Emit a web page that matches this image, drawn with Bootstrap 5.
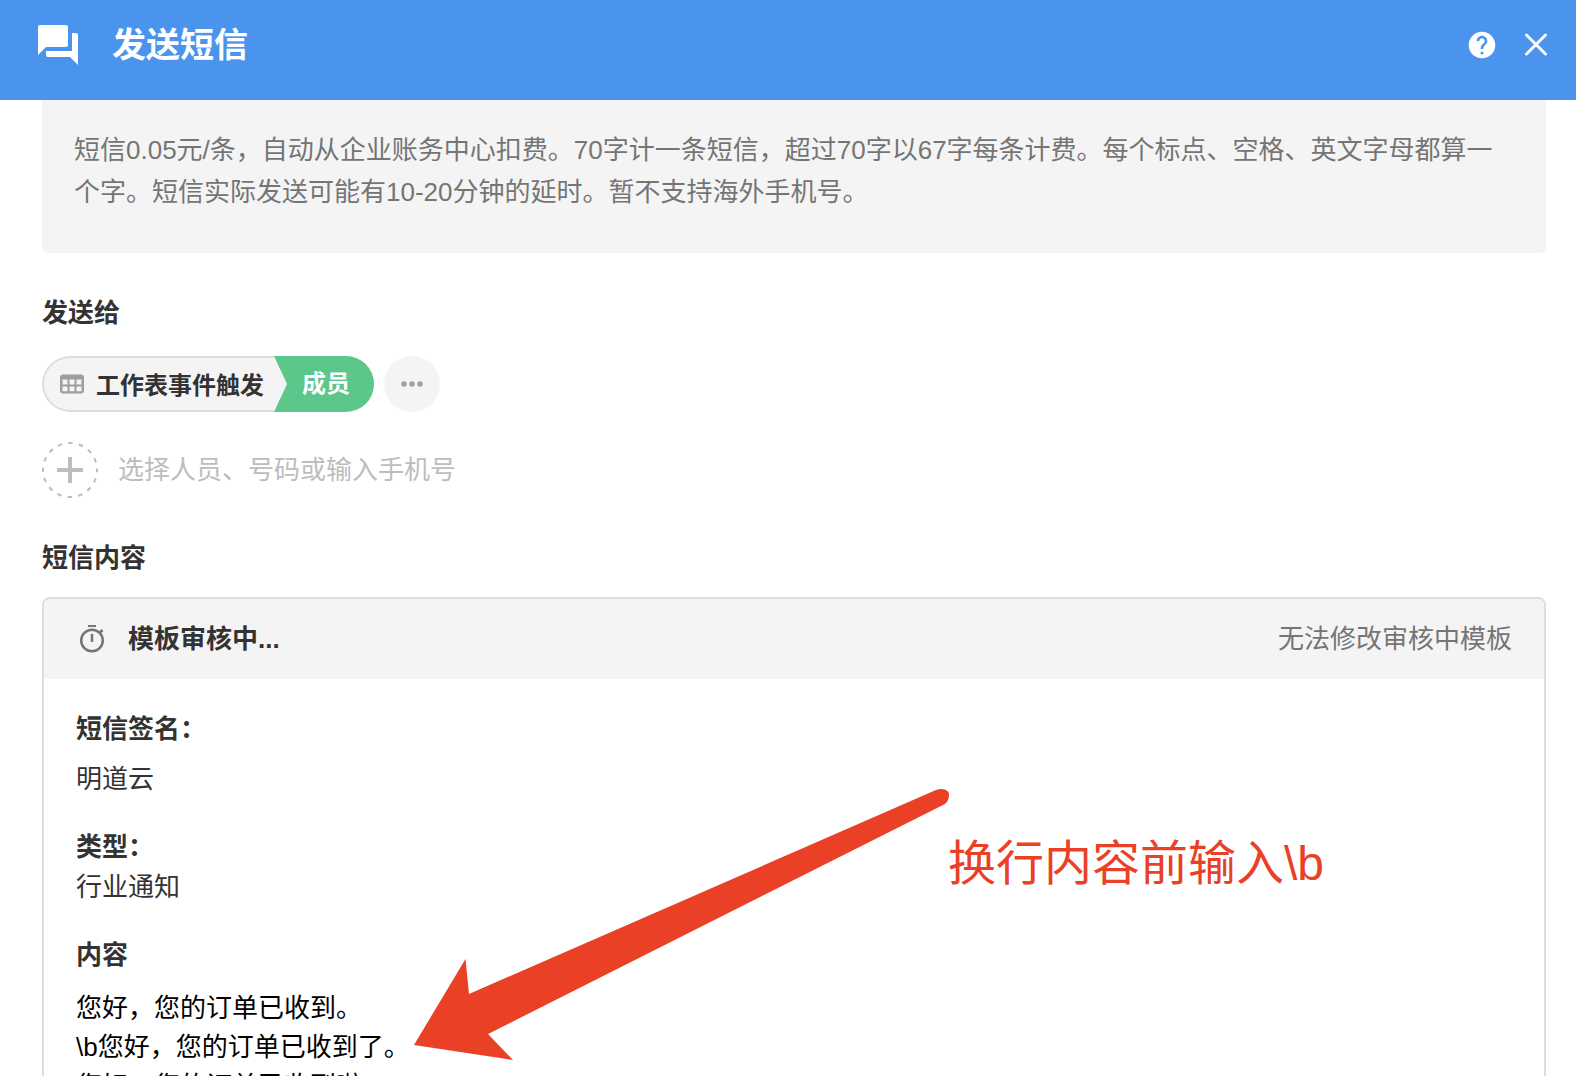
<!DOCTYPE html>
<html lang="zh-CN">
<head>
<meta charset="utf-8">
<meta name="viewport" content="width=device-width, initial-scale=1">
<title>发送短信</title>
<link href="https://cdn.jsdelivr.net/npm/bootstrap@5.3.0/dist/css/bootstrap.min.css" rel="stylesheet">
<style>
body { font-family: "Liberation Sans", "Noto Sans CJK SC", sans-serif; font-size: 26px; line-height: 40px; color: #333; }
.topbar { background: #4a94ed; height: 100px; padding: 0 24px 10px 38px; }
.topbar h1 { font-size: 34px; line-height: 48px; margin: 0 0 0 34px; font-weight: 700; }
.top-actions { gap: 22px; }
.icon-btn { border: 0; background: none; padding: 0; color: inherit; display: flex; align-items: center; justify-content: center; }
.panel { padding: 0 30px 0 42px; }
.tips { background: #f4f4f4; color: #757575; border-radius: 0 0 6px 6px; padding: 29px 32px 40px; line-height: 42px; }
.sec { margin-top: 40px; }
.sec-title { font-size: 26px; line-height: 40px; font-weight: 700; margin: 0; }
.pill-row { margin-top: 23px; gap: 10px; }
.pill { height: 56px; border-radius: 28px; background: #f4f4f4; overflow: hidden; font-size: 24px; font-weight: 700; }
.pill-source { height: 56px; border: 2px solid #ddd; border-right: 0; border-radius: 28px 0 0 28px; padding: 4px 10px 0 16px; gap: 12px; }
.pill-source svg { margin-bottom: 4px; }
.pill-field { height: 56px; width: 100px; background: #5bc78a; color: #fff; padding-left: 28px; clip-path: polygon(0 0, 100% 0, 100% 100%, 0 100%, 13px 50%); }
.more-btn { width: 56px; height: 56px; border-radius: 50%; background: #f4f4f4; color: #9e9e9e; }
.add-row { margin-top: 30px; gap: 20px; }
.add-btn { width: 56px; height: 56px; color: #bdbdbd; }
.add-input { color: #333; border: 0; outline: 0; padding: 0; background: none; height: 40px; }
.add-input::placeholder { color: #bdbdbd; opacity: 1; }
.tpl { border: 2px solid #ddd; border-radius: 8px; margin-top: 19px; }
.tpl-head { background: #f4f4f4; height: 80px; padding: 0 32px 0 34px; border-radius: 6px 6px 0 0; gap: 22px; }
.tpl-body { padding: 30px 32px; }
.tpl-body dt { font-weight: 700; }
.tpl-body dd { margin: 0 0 28px; }
.tpl-body .sign { margin-top: 10px; }
.tpl-body .sms-text { margin-top: 14px; line-height: 39px; color: #000; white-space: pre-line; }
.muted { color: #757575; }
.note-layer { position: absolute; left: 370px; top: 110px; color: #ea4026; pointer-events: none; }
.note-layer svg { overflow: visible; }
.note-text { position: absolute; left: 534px; top: 45px; font-size: 48px; line-height: 60px; white-space: nowrap; }
</style>
<script src="https://cdn.jsdelivr.net/npm/bootstrap@5.3.0/dist/js/bootstrap.bundle.min.js"></script>
</head>
<body>
<div class="vh-100 d-flex flex-column overflow-hidden bg-white">
  <header class="topbar d-flex align-items-center text-white flex-shrink-0">
    <svg width="40" height="40" viewBox="2 2 20 20" fill="currentColor" aria-hidden="true"><path d="M21 6h-2v9H6v2c0 .55.45 1 1 1h11l4 4V7c0-.55-.45-1-1-1zm-4 6V3c0-.55-.45-1-1-1H3c-.55 0-1 .45-1 1v14l4-4h10c.55 0 1-.45 1-1z"/></svg>
    <h1>发送短信</h1>
    <div class="top-actions ms-auto d-flex align-items-center">
      <button class="icon-btn" type="button" aria-label="帮助">
        <svg width="32" height="32" viewBox="0 0 24 24" fill="currentColor"><path d="M12 2C6.48 2 2 6.48 2 12s4.48 10 10 10 10-4.48 10-10S17.520 2 12 2zm1 17h-2v-2h2v2zm2.070-7.750l-.9.920C13.450 12.900 13 13.500 13 15h-2v-.5c0-1.100.45-2.100 1.170-2.830l1.240-1.260c.37-.36.59-.86.59-1.410 0-1.100-.9-2-2-2s-2 .9-2 2H8c0-2.210 1.790-4 4-4s4 1.790 4 4c0 .88-.36 1.680-.93 2.250z"/></svg>
      </button>
      <button class="icon-btn" type="button" aria-label="关闭">
        <svg width="32" height="32" viewBox="0 0 32 32" fill="none" stroke="currentColor" stroke-width="3" stroke-linecap="round"><path d="M6.500 6L25.500 25M25.500 6L6.500 25"/></svg>
      </button>
    </div>
  </header>

  <main class="panel flex-grow-1 overflow-hidden">
    <div class="tips">短信0.05元/条，自动从企业账务中心扣费。70字计一条短信，超过70字以67字每条计费。每个标点、空格、英文字母都算一个字。短信实际发送可能有10-20分钟的延时。暂不支持海外手机号。</div>

    <section class="sec">
      <h2 class="sec-title">发送给</h2>
      <div class="pill-row d-flex align-items-center">
        <div class="pill d-flex">
          <span class="pill-source d-flex align-items-center">
            <svg width="24" height="20" viewBox="0 0 24 20" fill="#9e9e9e" aria-hidden="true"><path fill-rule="evenodd" d="M3 .5H21A3 3 0 0 1 24 3.500V16.500A3 3 0 0 1 21 19.500H3A3 3 0 0 1 0 16.500V3.500A3 3 0 0 1 3 .5ZM2.500 5.500V10.500H7.500V5.500ZM9.500 5.500V10.500H14.500V5.500ZM16.500 5.500V10.500H21.500V5.500ZM2.500 12.500V17.300H7.500V12.500ZM9.500 12.500V17.300H14.500V12.500ZM16.500 12.500V17.300H21.500V12.500Z"/></svg>
            <span>工作表事件触发</span>
          </span>
          <span class="pill-field d-flex align-items-center">成员</span>
        </div>
        <button class="icon-btn more-btn" type="button" aria-label="更多">
          <svg width="22" height="6" viewBox="0 0 22 6" fill="currentColor"><circle cx="3" cy="3" r="2.700"/><circle cx="11" cy="3" r="2.700"/><circle cx="19" cy="3" r="2.700"/></svg>
        </button>
      </div>
      <div class="add-row d-flex align-items-center">
        <button class="icon-btn add-btn" type="button" aria-label="添加">
          <svg width="56" height="56" viewBox="0 0 56 56" fill="none" stroke="currentColor"><circle cx="28" cy="28" r="27" stroke-width="2" stroke-dasharray="4.500 6.103" stroke-dashoffset="2.250"/><path d="M15 28H41M28 15V41" stroke-width="4"/></svg>
        </button>
        <input class="add-input flex-grow-1" type="text" aria-label="接收人" placeholder="选择人员、号码或输入手机号">
      </div>
    </section>

    <section class="sec">
      <h2 class="sec-title">短信内容</h2>
      <div class="tpl">
        <div class="tpl-head d-flex align-items-center">
          <svg class="muted" width="28" height="28" viewBox="0 0 28 28" fill="none" stroke="currentColor" stroke-width="2.500" aria-hidden="true"><circle cx="14" cy="15.500" r="10.800"/><path d="M10 .5H18" stroke-width="3"/><path d="M14 9V17M21.500 8L24.500 5"/></svg>
          <strong>模板审核中...</strong>
          <span class="ms-auto muted">无法修改审核中模板</span>
        </div>
        <div class="tpl-body position-relative">
          <dl class="m-0">
            <dt>短信签名：</dt>
            <dd class="sign">明道云</dd>
            <dt>类型：</dt>
            <dd>行业通知</dd>
            <dt>内容</dt>
            <dd class="sms-text">您好，您的订单已收到。
\b您好，您的订单已收到了。
您好，您的订单已收到啦。</dd>
          </dl>
          <div class="note-layer">
            <svg width="534" height="272" viewBox="414 789 534 272" fill="currentColor" aria-hidden="true"><path d="M414 1045L465.500 959L469 994L936 790C944 787 949 791 949 794C949 800 947 803 943 805L488 1034L513 1060Z"/></svg>
            <div class="note-text">换行内容前输入\b</div>
          </div>
        </div>
      </div>
    </section>
  </main>
</div>
</body>
</html>
